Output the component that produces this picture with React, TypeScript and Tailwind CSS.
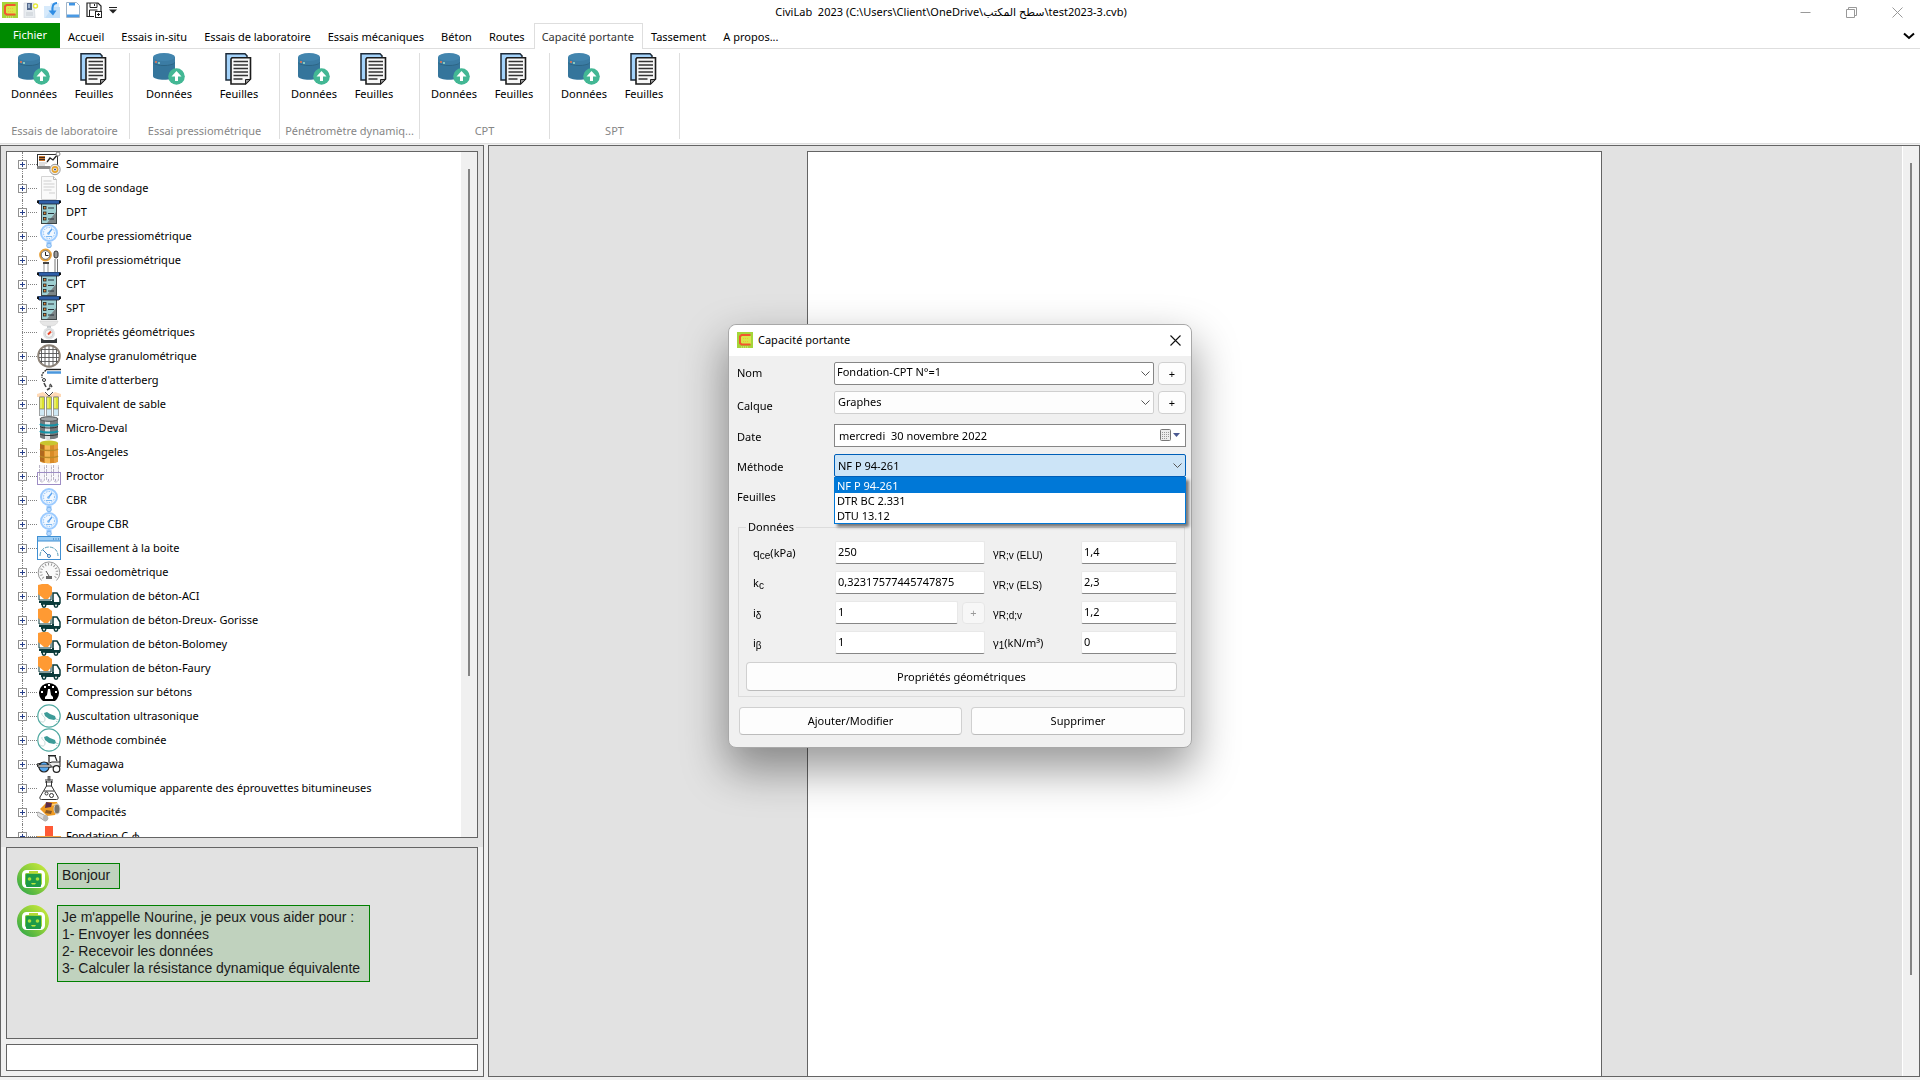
import React, { useState } from 'react';
import { clsx } from 'clsx';

type IconName =
  | 'summary' | 'log' | 'probe' | 'gauge' | 'profile' | 'scale' | 'sieve' | 'atterberg' | 'tubes'
  | 'drum' | 'barrel' | 'proctor' | 'window' | 'dial' | 'truck' | 'press' | 'ultrasound' | 'roller'
  | 'flask' | 'compactor' | 'footing';

interface TreeItem {
  label: string;
  icon: IconName;
  leaf?: boolean;
}

const treeItems: TreeItem[] = [
  { label: 'Sommaire', icon: 'summary' },
  { label: 'Log de sondage', icon: 'log' },
  { label: 'DPT', icon: 'probe' },
  { label: 'Courbe pressiométrique', icon: 'gauge' },
  { label: 'Profil pressiométrique', icon: 'profile' },
  { label: 'CPT', icon: 'probe' },
  { label: 'SPT', icon: 'probe' },
  { label: 'Propriétés géométriques', icon: 'scale', leaf: true },
  { label: 'Analyse granulométrique', icon: 'sieve' },
  { label: "Limite d'atterberg", icon: 'atterberg' },
  { label: 'Equivalent de sable', icon: 'tubes' },
  { label: 'Micro-Deval', icon: 'drum' },
  { label: 'Los-Angeles', icon: 'barrel' },
  { label: 'Proctor', icon: 'proctor' },
  { label: 'CBR', icon: 'gauge' },
  { label: 'Groupe CBR', icon: 'gauge' },
  { label: 'Cisaillement à la boite', icon: 'window' },
  { label: 'Essai oedomètrique', icon: 'dial' },
  { label: 'Formulation de béton-ACI', icon: 'truck' },
  { label: 'Formulation de béton-Dreux- Gorisse', icon: 'truck' },
  { label: 'Formulation de béton-Bolomey', icon: 'truck' },
  { label: 'Formulation de béton-Faury', icon: 'truck' },
  { label: 'Compression sur bétons', icon: 'press' },
  { label: 'Auscultation ultrasonique', icon: 'ultrasound' },
  { label: 'Méthode combinée', icon: 'ultrasound' },
  { label: 'Kumagawa', icon: 'roller' },
  { label: 'Masse volumique apparente des éprouvettes bitumineuses', icon: 'flask' },
  { label: 'Compacités', icon: 'compactor' },
  { label: 'Fondation C-φ', icon: 'footing' },
];

const tabs = [
  'Accueil',
  'Essais in-situ',
  'Essais de laboratoire',
  'Essais mécaniques',
  'Béton',
  'Routes',
  'Capacité portante',
  'Tassement',
  'A propos...',
];

const ribbonGroups = [
  { label: 'Essais de laboratoire', width: 'w-[130px]', button: 'w-[60px]' },
  { label: 'Essai pressiométrique', width: 'w-[150px]', button: 'w-[70px]' },
  { label: 'Pénétromètre dynamiq...', width: 'w-[140px]', button: 'w-[60px]' },
  { label: 'CPT', width: 'w-[130px]', button: 'w-[60px]' },
  { label: 'SPT', width: 'w-[130px]', button: 'w-[60px]' },
];

const methods = ['NF P 94-261', 'DTR BC 2.331', 'DTU 13.12'];

const treeIcons: Record<IconName, React.ReactNode> = {
  summary: (
    <>
      <rect x="0.5" y="2.5" width="20" height="13" fill="#fff" stroke="#333" />
      <rect x="2" y="4" width="6" height="5" fill="#c8742c" />
      <path d="M2 5.5h6M2 7.5h6" stroke="#3b2a20" />
      <path d="M0 14h13v3H0z" fill="#8a8a8a" />
      <path d="M2 11h8M2 13h6" stroke="#bbb" />
      <path d="M10 10l3-4 3 2 5-6" fill="none" stroke="#222" strokeWidth="1.3" />
      <circle cx="21" cy="2" r="2" fill="#fff" stroke="#888" />
      <circle cx="18" cy="17.5" r="5.2" fill="#ededed" stroke="#999" />
      <circle cx="18" cy="17.5" r="2.6" fill="#fff" stroke="#e5a22b" strokeWidth="1.6" />
      <circle cx="18" cy="17.5" r="1" fill="#334a7a" />
    </>
  ),
  log: (
    <>
      <path d="M4.5.5h12l3 3v20h-15z" fill="#fafafa" stroke="#d4d4d4" />
      <path d="M16.5.5v3h3" fill="none" stroke="#bbb" />
      <path d="M6.5 5h8M6.5 8h11M6.5 11h11M6.5 14h8M12 17h6" stroke="#cfcfcf" />
    </>
  ),
  probe: (
    <>
      <rect x="4" y="3" width="16" height="21" fill="#3d4547" />
      <rect x="5" y="4" width="14" height="19" fill="#9fd0d2" />
      <path d="M19 12v11h-9z" fill="#7c8587" />
      <path d="M1 0h22l1 2-2 2H2L0 2z" fill="#2f5fa8" stroke="#1c2533" strokeWidth="0.8" />
      <path d="M0 2h2M22 2h2" stroke="#111" strokeWidth="2" />
      <g fill="#e08a3c" stroke="#222" strokeWidth="0.8">
        <rect x="6.5" y="6.5" width="2.5" height="2.5" />
        <rect x="6.5" y="12" width="2.5" height="2.5" />
        <rect x="6.5" y="17.5" width="2.5" height="2.5" />
      </g>
      <path d="M11 8h6M11 13.5h6M11 19h6" stroke="#26313a" />
    </>
  ),
  gauge: (
    <>
      <circle cx="12" cy="9" r="8" fill="#e6f2ff" stroke="#9ccbff" strokeWidth="2" />
      <circle cx="12" cy="9" r="5.5" fill="#f2f8ff" stroke="#6fb0f5" strokeDasharray="1 1.5" />
      <path d="M11 10l4-5" stroke="#5aa2ee" strokeWidth="1.4" />
      <circle cx="11.5" cy="9.5" r="1.3" fill="#7db8f2" />
      <path d="M9 12.5h6" stroke="#7db8f2" />
      <path d="M9.5 18h5v2h-5z" fill="#9ccbff" />
      <circle cx="12" cy="21.5" r="2.3" fill="#b9dbff" stroke="#7ab4f0" />
    </>
  ),
  profile: (
    <>
      <circle cx="8.5" cy="7" r="5.5" fill="#fff" stroke="#e8a23a" strokeWidth="1.8" />
      <circle cx="8.5" cy="7" r="4.3" fill="none" stroke="#333" strokeWidth="0.7" />
      <path d="M8.5 4v3.5h3" fill="none" stroke="#222" />
      <path d="M6 14h6v2H6z" fill="#444" />
      <path d="M7 16v8M11 16v8" stroke="#999" />
      <rect x="17" y="3" width="4" height="7" rx="2" fill="#999" stroke="#333" />
      <path d="M18 11v13M20.5 11v13" stroke="#777" />
    </>
  ),
  scale: (
    <>
      <path d="M3 1h18c-1 4-4 5-9 5S4 5 3 1z" fill="#e6e6e6" stroke="#d0d0d0" strokeWidth="0.6" />
      <path d="M10 6h4v3h-4z" fill="#c4c8cb" />
      <circle cx="12" cy="13.5" r="6" fill="#e0e3e5" />
      <circle cx="12" cy="13.5" r="4" fill="#f4f4f4" stroke="#cfcfcf" />
      <path d="M11 14.5l3-3" stroke="#e8472b" strokeWidth="2" />
      <path d="M4 18l3 2h10l3-2v5H4z" fill="#34383b" />
    </>
  ),
  sieve: (
    <>
      <circle cx="12" cy="12" r="10.8" fill="#fff" stroke="#8d8378" strokeWidth="2" />
      <path
        d="M4 5.5h16M2 9.5h20M2 13.5h20M3 17.5h18M8 2.5v19M12 2v20M16 2.5v19M4.5 5v14M19.5 5v14"
        stroke="#555"
        strokeWidth="0.9"
      />
    </>
  ),
  atterberg: (
    <>
      <path d="M9 1.5h15" stroke="#222" strokeWidth="1.4" />
      <path d="M10 4.5h14" stroke="#4a97dd" strokeWidth="2.5" />
      <path d="M9 2L5 6v4" fill="none" stroke="#333" strokeDasharray="2 1" strokeWidth="1.4" />
      <circle cx="7" cy="12" r="1.5" fill="none" stroke="#333" />
      <path d="M7 15l2 4M13 16l2 3M10 22l3-2" stroke="#444" strokeWidth="1.6" />
      <circle cx="13" cy="18" r="1.2" fill="#777" />
    </>
  ),
  tubes: (
    <>
      <path d="M0 2l6-2 6 4 6-4 6 2v3H0z" fill="#ffd9b5" />
      <path d="M8 0l4 4 4-4" fill="none" stroke="#444" />
      <g stroke="#8c8c8c" strokeWidth="0.8">
        <path d="M2.5 5h5v19h-5zM9.5 5h5v19h-5zM16.5 5h5v19h-5z" fill="#cfe9f5" />
        <path d="M2.5 5h5v12h-5zM9.5 5h5v12h-5zM16.5 5h5v12h-5z" fill="#dbe22e" />
      </g>
      <path d="M4 6v10M11 6v10M18 6v10" stroke="#f4f7a0" />
    </>
  ),
  drum: (
    <>
      <path d="M3 3v18c0 3 18 3 18 0V3z" fill="#767b7e" />
      <path d="M8 4h5v19H8z" fill="#dde0e2" />
      <ellipse cx="12" cy="3" rx="9" ry="2.3" fill="#9fa4a6" stroke="#4b4f51" />
      <path d="M3 8c2 2 16 2 18 0M3 15c2 2 16 2 18 0" fill="none" stroke="#1391a5" strokeWidth="2.2" />
      <path d="M3 10.5c2 2 16 2 18 0M3 18c2 2 16 2 18 0" fill="none" stroke="#2d3134" />
    </>
  ),
  barrel: (
    <>
      <path d="M3 3v18c0 3 18 3 18 0V3z" fill="#d98b27" />
      <path d="M8 4h5v19H8z" fill="#f6b956" />
      <path d="M17 4h4v18l-4 1z" fill="#e8a040" />
      <path d="M3 4h4v18l-4-1z" fill="#b0691f" />
      <ellipse cx="12" cy="3" rx="9" ry="2.5" fill="#c9c52f" />
      <path d="M3 9c2 2 16 2 18 0M3 16c2 2 16 2 18 0" fill="none" stroke="#b98a28" strokeWidth="1.4" />
    </>
  ),
  proctor: (
    <>
      <g fill="#f7f5fa" stroke="#b9b4c4">
        <path d="M2.5 1v14c0 4 5 4 5 0V1M9.5 1v14c0 4 5 4 5 0V1M16.5 1v14c0 4 5 4 5 0V1" strokeDasharray="3 1" />
      </g>
      <rect x="0.5" y="8.5" width="23" height="12" fill="none" stroke="#9d8cc4" />
      <path d="M4 15v2M11.5 15v2M18.5 15v2" stroke="#b4a8d0" />
    </>
  ),
  window: (
    <>
      <rect x="0.5" y="0.5" width="23" height="23" fill="#fff" stroke="#3f8fd2" />
      <rect x="1" y="1" width="22" height="4" fill="#9bcdf5" />
      <path d="M0 5h24" stroke="#3f8fd2" />
      <path d="M16 3h1M18.5 3h1M21 3h1" stroke="#2b71b0" />
      <path d="M3 20c0-12 18-12 18 0" fill="none" stroke="#5c9fb8" strokeDasharray="4 1" />
      <path d="M6 14l6 6" stroke="#3679b5" />
      <circle cx="12" cy="20" r="1.5" fill="#fff" stroke="#3679b5" />
    </>
  ),
  dial: (
    <>
      <path d="M4.5 20.5a10.8 10.8 0 1 1 15 0" fill="#fafafa" stroke="#999" />
      <path d="M6.5 18a8 8 0 1 1 11 0" fill="none" stroke="#999" strokeWidth="2.5" strokeDasharray="1 2" />
      <path d="M9 11l3 5" stroke="#555" />
      <path d="M9 16h6v3H9z" fill="#666" />
    </>
  ),
  truck: (
    <>
      <path d="M2 9v7h12V9" fill="#fff" stroke="#0a3a3a" />
      <path d="M1 1l4-1h6l4 3v7l-4 5H7l-6-5z" fill="#ff9a33" />
      <path d="M16 9h4l3 5v5h-7z" fill="#fff" stroke="#0a3a3a" strokeWidth="1.5" />
      <path d="M2 17h13v-1h2v2h6v3H4v-2H2z" fill="#0a3a3a" />
      <circle cx="7" cy="21.5" r="1.7" fill="#fff" stroke="#0a3a3a" strokeWidth="1.5" />
      <circle cx="19" cy="21.5" r="1.7" fill="#fff" stroke="#0a3a3a" strokeWidth="1.5" />
    </>
  ),
  press: (
    <>
      <path d="M6 21h12l2-2a10 10 0 1 0-16 0z" fill="#000" />
      <path d="M11 9h2l1 6 2 2v2H8v-2l2-2z" fill="#fff" />
      <g fill="#fff">
        <rect x="4" y="11" width="2" height="2" />
        <rect x="18" y="11" width="2" height="2" />
        <rect x="7" y="6" width="2" height="2" />
        <rect x="15" y="6" width="2" height="2" />
        <rect x="11" y="4" width="2" height="2" />
      </g>
    </>
  ),
  ultrasound: (
    <>
      <circle cx="12" cy="12" r="11.2" fill="#fff" stroke="#4fa9a1" strokeWidth="1.2" />
      <path d="M3 17c3 2 5 1 5-2s-4-3-3-6" fill="none" stroke="#c7dcda" />
      <path d="M7 9l3-1 3 2 5 2 1 3-2 1-5-1-4-3z" fill="#3d9b98" />
      <path d="M19 15l3 1M19 17l2 2" stroke="#b5cfcd" />
    </>
  ),
  roller: (
    <>
      <path d="M12 10V4h6l2 5" fill="#fff" stroke="#222" strokeWidth="1.2" />
      <path d="M11 3.500h8M23 4v6" stroke="#222" strokeWidth="1.2" />
      <path d="M0 12l5-1h7l3-1h8v5H1z" fill="#eee" stroke="#222" />
      <circle cx="7" cy="15" r="5" fill="#57a8ee" stroke="#222" strokeWidth="1.2" />
      <path d="M1 13h13v2H1z" fill="#fff" stroke="#222" strokeWidth="0.8" />
      <circle cx="19.5" cy="17" r="3.3" fill="#fff" stroke="#222" strokeWidth="1.2" />
    </>
  ),
  flask: (
    <>
      <path d="M9.5 5v5L3 21c-.5 1.500 0 2.500 1.500 2.500h15c1.500 0 2-1 1.500-2.500L14.500 10V5" fill="#fff" stroke="#333" />
      <path d="M8 4h8M8 6h8M9 10h6M7 15h10" stroke="#333" />
      <path d="M11 0h2v4h-2z" fill="#999" stroke="#333" strokeWidth="0.7" />
      <circle cx="9.5" cy="17.5" r="1.5" fill="none" stroke="#333" />
      <circle cx="14.5" cy="19.5" r="2" fill="none" stroke="#333" />
    </>
  ),
  compactor: (
    <>
      <path d="M3 9l7-7 10 0 2 6-4 7-8 1z" fill="#ee9a22" />
      <path d="M9 2l6 1-1 4-6 1z" fill="#5b2b4b" />
      <path d="M9 10l6 1-1 3-6-1z" fill="#8a5a28" />
      <path d="M15 5l5-1" stroke="#ffd27a" strokeWidth="1.5" />
      <ellipse cx="20" cy="9" rx="3" ry="5" fill="#77736c" stroke="#ccc" />
      <path d="M1 12l8 4c3 1 2 5-1 5L2 17c-2-1-3-4-1-5z" fill="#e3e3e3" stroke="#888" strokeWidth="0.8" />
      <ellipse cx="8.5" cy="18" rx="2.5" ry="3" fill="#b5b5b5" />
    </>
  ),
  footing: (
    <>
      <rect x="8" y="2" width="8" height="12" fill="#ff5a36" />
      <path d="M0 12h24v3H0z" fill="#f2a341" />
    </>
  ),
};

const TreeIcon: React.FC<{ name: IconName }> = ({ name }) => (
  <svg className="size-6 shrink-0" viewBox="0 0 24 24" aria-hidden="true">
    {treeIcons[name]}
  </svg>
);

const Logo: React.FC = () => (
  <svg className="size-4 shrink-0" viewBox="0 0 16 16" aria-hidden="true">
    <rect width="16" height="16" fill="#a5d63a" />
    <rect x="4" y="4" width="10" height="8" fill="#d8e84a" />
    <path d="M13.5 3h-9L3 4.500v6.500l1.500 1.500h9" fill="none" stroke="#f2562f" strokeWidth="2" />
    <path d="M6 6.5h6M6 9.5h6" stroke="#eebf3c" strokeDasharray="1 1" />
    <path d="M4 15h8" stroke="#dff08a" strokeDasharray="1 1" />
  </svg>
);

const DatabaseIcon: React.FC = () => (
  <svg className="size-8" viewBox="0 0 32 32" aria-hidden="true">
    <path d="M0 4v19c0 5 22 5 22 0V4z" fill="#35759b" />
    <path d="M0 4v6c0 4 22 4 22 0V4z" fill="#3b7ca4" />
    <ellipse cx="11" cy="4" rx="11" ry="4" fill="#4285ae" />
    <path d="M0 9.5c2 4 20 4 22 0" fill="none" stroke="#2b6484" />
    <path d="M2 9h2" stroke="#f0764f" strokeWidth="1.5" />
    <path d="M5 10h2" stroke="#9fe0c8" strokeWidth="1.5" />
    <circle cx="23.5" cy="23.5" r="8.3" fill="#43b794" />
    <path d="M23.5 18l5 5.500h-3.500V28h-3v-4.500h-3.500z" fill="#fff" />
  </svg>
);

const SheetsIcon: React.FC = () => (
  <svg className="size-8" viewBox="0 0 32 32" aria-hidden="true">
    <path d="M3 .8h19l2 2V27H3z" fill="#a4d3fb" stroke="#1d2b3a" strokeWidth="1.5" />
    <path d="M9 4.800h18.500V26l-5 5H8V6z" fill="#f7f7f7" stroke="#1c1c1c" strokeWidth="1.6" />
    <path
      d="M10.5 8.5h14.500M10.5 12h14.500M10.5 15.5h14.500M10.5 19h14.500M10.5 22.5h14.500M10.5 26h9"
      stroke="#333"
      strokeWidth="1.5"
    />
    <path d="M22.5 31v-4.500h5z" fill="#999" stroke="#1c1c1c" />
  </svg>
);

const Chevron: React.FC<{ className?: string }> = ({ className }) => (
  <svg className={clsx('pointer-events-none h-[5px] w-[9px]', className)} viewBox="0 0 9 5" aria-hidden="true">
    <path d="M.5.5l4 4 4-4" fill="none" stroke="#555" />
  </svg>
);

const RobotAvatar: React.FC = () => (
  <svg className="size-8 shrink-0" viewBox="0 0 32 32" aria-hidden="true">
    <defs>
      <linearGradient id="robot-bg" x1="1" y1="0" x2="0" y2="1">
        <stop offset="0" stopColor="#d4ee3a" />
        <stop offset="0.5" stopColor="#86cc3c" />
        <stop offset="1" stopColor="#1fa04a" />
      </linearGradient>
    </defs>
    <circle cx="16" cy="16" r="16" fill="url(#robot-bg)" />
    <rect x="6.5" y="8.5" width="20" height="15" rx="3" fill="none" stroke="#fff" strokeWidth="3" />
    <path d="M12 8h9v2h-9z" fill="#b5d936" />
    <rect x="9" y="11" width="15" height="13" rx="1" fill="#1d9a48" />
    <circle cx="12.5" cy="16" r="1.8" fill="#a7e03c" />
    <circle cx="20.5" cy="16" r="1.8" fill="#a7e03c" />
    <path d="M14 20h5l-1 1.500h-3z" fill="#b9e63e" />
  </svg>
);

const TitleBar: React.FC = () => (
  <div className="flex h-[23px] items-start">
    <div className="flex w-[120px] items-center gap-[5px] pl-0.5 pt-0.5">
      <Logo />
      <button type="button" aria-label="Nouveau">
        <svg className="size-4" viewBox="0 0 16 16">
          <path d="M1 1h10l1 15H1z" fill="#e8ecf0" stroke="#ccd2d8" strokeWidth="0.6" />
          <path d="M4 1h5v7H4z" fill="#53688c" />
          <path d="M5 2h2v4H5z" fill="#9db2cc" />
          <path d="M3 11h7M3 13h7" stroke="#c6ccd2" />
          <circle cx="12.5" cy="4" r="2" fill="#fff" stroke="#e8ea3c" strokeWidth="1.4" />
        </svg>
      </button>
      <button type="button" aria-label="Ouvrir">
        <svg className="size-4" viewBox="0 0 16 16">
          <path d="M0 4h6l1-3h8v15H0z" fill="#d7eafb" />
          <path d="M9 5h7v11H1z" fill="#c2dff8" />
          <path d="M13 1c-4 0-5 3-4.500 9" fill="none" stroke="#2f8de4" strokeWidth="2" />
          <path d="M4.5 8.5h8l-3.500 5z" fill="#2f8de4" />
        </svg>
      </button>
      <button type="button" aria-label="Page">
        <svg className="size-4" viewBox="0 0 16 16">
          <path d="M1.5.5h10l3 3v12h-13z" fill="#fff" stroke="#9fb4c8" />
          <path d="M4 1h6v2.500H4z" fill="#3f94e3" />
          <path d="M2 12.5h12V15H2z" fill="#4a9ae4" />
        </svg>
      </button>
      <button type="button" aria-label="Enregistrer">
        <svg className="size-4" viewBox="0 0 16 16">
          <path d="M8 14.5H1V1h11l3 3v5" fill="none" stroke="#222" strokeWidth="1.2" />
          <path d="M4 1v4.500h7V1M8.5 2v2M3.5 14V8h8" fill="none" stroke="#222" />
          <rect x="9.5" y="9.5" width="6" height="6" fill="#fff" stroke="#222" />
          <path d="M12.5 11v3M11 12.5h3" stroke="#222" />
        </svg>
      </button>
      <button type="button" aria-label="Personnaliser" className="pl-0.5">
        <svg className="h-4 w-2" viewBox="0 0 8 16">
          <path d="M0 5.5h8" stroke="#222" />
          <path d="M0 7.5h8l-4 4z" fill="#222" />
        </svg>
      </button>
    </div>
    <h1 className="flex-1 whitespace-pre text-center leading-6">
      {'CiviLab  2023 (C:\\Users\\Client\\OneDrive\\سطح المكتب\\test2023-3.cvb)'}
    </h1>
    <div className="flex text-[#999]">
      <button type="button" aria-label="Réduire" className="flex h-6 w-[46px] items-center justify-center">
        <svg className="size-[11px]" viewBox="0 0 11 11">
          <path d="M.5 5.5h10" stroke="currentColor" />
        </svg>
      </button>
      <button type="button" aria-label="Restaurer" className="flex h-6 w-[46px] items-center justify-center">
        <svg className="size-[11px]" viewBox="0 0 11 11" fill="none" stroke="currentColor">
          <path d="M.5 2.5h8v8h-8zM2.5 2.5v-2h8v8h-2" />
        </svg>
      </button>
      <button type="button" aria-label="Quitter" className="flex h-6 w-[46px] items-center justify-center">
        <svg className="size-[11px]" viewBox="0 0 11 11">
          <path d="M.5.5l10 10M10.5.5l-10 10" stroke="currentColor" />
        </svg>
      </button>
    </div>
  </div>
);

const Ribbon: React.FC = () => {
  const [active, setActive] = useState('Capacité portante');

  return (
    <header className="bg-white">
      <TitleBar />
      <nav className="flex h-[26px] border-b border-[#dedede]">
        <button type="button" className="h-[25px] w-[60px] bg-[#008b00] text-white">Fichier</button>
        {tabs.map((tab) => (
          <button
            key={tab}
            type="button"
            onClick={() => setActive(tab)}
            className={clsx(
              'h-[26px] border border-b-0 pl-[7px] pr-2 pt-0.5',
              tab === active ? 'border-[#dedede] bg-white text-[#333]' : 'border-transparent'
            )}
          >
            {tab}
          </button>
        ))}
        <button type="button" aria-label="Réduire le ruban" className="ml-auto mr-[5px]">
          <svg className="h-2 w-3" viewBox="0 0 12 8">
            <path d="M1 1.5l5 4.500 5-4.500" fill="none" stroke="#000" strokeWidth="2" />
          </svg>
        </button>
      </nav>
      <div className="flex h-[95px] border-b border-[#dedede] pb-1 pt-1">
        {ribbonGroups.map((group) => (
          <section
            key={group.label}
            className={clsx('flex flex-col justify-between border-r border-[#dedede]', group.width)}
          >
            <div className="flex pl-1">
              <button type="button" className={clsx('flex flex-col items-center', group.button)}>
                <DatabaseIcon />
                <span className="leading-[18px]">Données</span>
              </button>
              <button type="button" className={clsx('flex flex-col items-center', group.button)}>
                <SheetsIcon />
                <span className="leading-[18px]">Feuilles</span>
              </button>
            </div>
            <h2 className="whitespace-nowrap text-center leading-4 text-[#868686]">{group.label}</h2>
          </section>
        ))}
      </div>
    </header>
  );
};

const Tree: React.FC = () => (
  <div className="flex min-h-0 flex-1 border border-[#646464] bg-white">
    <ul className="flex-1 overflow-hidden">
      {treeItems.map((item) => (
        <li key={item.label} className="flex h-6 items-center pl-[11px]">
          <span className="relative flex h-6 w-[19px] items-center">
            <span className="absolute inset-y-0 left-1 border-l border-dotted border-[#808080]" />
            <span className="absolute left-1 right-0 border-t border-dotted border-[#808080]" />
            {!item.leaf && (
              <button
                type="button"
                aria-label={`Développer ${item.label}`}
                className="relative size-[9px] border border-[#919191] bg-white"
              >
                <svg className="size-[7px]" viewBox="0 0 7 7">
                  <path d="M1 3.5h5M3.5 1v5" stroke="#27408b" />
                </svg>
              </button>
            )}
          </span>
          <TreeIcon name={item.icon} />
          <span className="whitespace-nowrap pl-[5px]">{item.label}</span>
        </li>
      ))}
    </ul>
    <div className="flex w-4 justify-center bg-[#f0f0f0] pb-[161px] pt-[17px]">
      <div className="w-0.5 bg-[#858585]" />
    </div>
  </div>
);

const messages = [
  'Bonjour',
  "Je m'appelle Nourine, je peux vous aider pour :\n1- Envoyer les données\n2- Recevoir les données\n3- Calculer la résistance dynamique équivalente",
];

const Sidebar: React.FC = () => (
  <aside className="flex w-[484px] shrink-0 flex-col border border-[#646464] bg-[#f0f0f0]">
    <div className="flex min-h-0 flex-1 flex-col bg-[#e2e2e2] px-[5px] pb-[9px] pt-[5px]">
      <Tree />
    </div>
    <div className="flex flex-col gap-[5px] px-[5px] pb-[5px]">
      <div className="flex h-48 flex-col gap-2.5 border border-[#646464] bg-[#e2e2e2] pl-2.5 pt-[15px]">
        {messages.map((message) => (
          <div key={message} className="flex items-start gap-2">
            <RobotAvatar />
            <p className="whitespace-pre-line border border-[#008000] bg-[#c0d2be] pb-1 pl-1 pr-[9px] pt-[3px] font-['Liberation_Sans',Arial,sans-serif] text-[14px] leading-[17px] text-[#1a1a1a]">
              {message}
            </p>
          </div>
        ))}
      </div>
      <input aria-label="Message" className="h-[27px] border border-[#646464] bg-white px-1 outline-none" />
    </div>
  </aside>
);

const Workspace: React.FC = () => (
  <main className="flex flex-1 border border-[#646464] bg-[#e2e2e2]">
    <div className="flex flex-1 justify-center pl-[17px] pt-[5px]">
      <div className="w-[795px] border border-b-0 border-[#646464] bg-white" />
    </div>
    <div className="flex w-[17px] justify-center border-l border-white bg-[#f0f0f0] pb-[101px] pt-[17px]">
      <div className="w-0.5 bg-[#858585]" />
    </div>
  </main>
);

const smallButton =
  'h-[23px] w-7 rounded-[4px] border border-[#d0d0d0] bg-[#fdfdfd] leading-none';
const wideButton = 'rounded-[4px] border border-[#d0d0d0] border-b-[#bcbcbc] bg-[#fdfdfd]';
const fieldInput =
  'h-[23px] w-full min-w-0 rounded-[2px] border border-[#e8e8e8] border-b-[#868686] bg-white px-[2px] pb-0.5 outline-none';

const Field: React.FC<{ id: string; value: string; label: React.ReactNode; children?: React.ReactNode }> = ({
  id,
  value,
  label,
  children,
}) => (
  <>
    <label htmlFor={id} className="whitespace-nowrap">{label}</label>
    <div className="flex items-center gap-1">
      <input id={id} defaultValue={value} className={fieldInput} />
      {children}
    </div>
  </>
);

const Sub: React.FC<{ children: React.ReactNode }> = ({ children }) => (
  <sub className="font-['Liberation_Sans',Arial,sans-serif] text-[10px]">{children}</sub>
);

const BearingDialog: React.FC = () => {
  const [method, setMethod] = useState(methods[0]);

  return (
    <div className="fixed inset-0 flex items-center justify-center pb-2">
      <div
        role="dialog"
        aria-labelledby="dialog-title"
        className="w-[464px] rounded-lg border border-[#a8a8a8] bg-[#f0f0f0] shadow-[0_20px_44px_2px_rgba(0,0,0,0.4)]"
      >
        <div className="flex h-[31px] items-center rounded-t-lg bg-white pl-2 pr-2.5">
          <Logo />
          <h2 id="dialog-title" className="pl-[5px]">Capacité portante</h2>
          <button type="button" aria-label="Fermer" className="ml-auto">
            <svg className="size-[11px]" viewBox="0 0 11 11">
              <path d="M.5.5l10 10M10.5.5l-10 10" stroke="#111" strokeWidth="1.1" />
            </svg>
          </button>
        </div>

        <div className="pb-3 pl-2 pr-[5px] pt-1.5">
          <div className="grid grid-cols-[97px_1fr] items-center">
            <label htmlFor="nom">Nom</label>
            <div className="flex gap-1">
              <div className="relative flex-1">
                <select
                  id="nom"
                  className="h-[23px] w-full appearance-none rounded-[2px] border border-[#868686] bg-white px-[2px] pb-0.5"
                >
                  <option>Fondation-CPT N°=1</option>
                </select>
                <Chevron className="absolute right-1 top-[9px]" />
              </div>
              <button type="button" aria-label="Ajouter un nom" className={smallButton}>+</button>
            </div>

            <label htmlFor="calque" className="pt-[13px]">Calque</label>
            <div className="flex gap-1 pt-1.5">
              <div className="relative flex-1">
                <select
                  id="calque"
                  className="h-[23px] w-full appearance-none rounded-[2px] border border-[#cfcfcf] bg-[#fdfdfd] px-[3px]"
                >
                  <option>Graphes</option>
                </select>
                <Chevron className="absolute right-1 top-[9px]" />
              </div>
              <button type="button" aria-label="Ajouter un calque" className={smallButton}>+</button>
            </div>

            <label htmlFor="date" className="pt-[13px]">Date</label>
            <div className="relative pt-[10px]">
              <input
                id="date"
                defaultValue="mercredi  30 novembre 2022"
                className="h-[23px] w-full border border-[#868686] bg-white px-1 outline-none"
              />
              <svg className="absolute right-1.5 top-[15px] h-3 w-5" viewBox="0 0 20 12" aria-hidden="true">
                <rect x="0.5" y="0.5" width="10" height="11" rx="1" fill="#ececec" stroke="#777" />
                <path d="M2 3.5h7M2 5.5h7M2 7.5h7M2 9.5h5" stroke="#999" strokeDasharray="1 1" />
                <path d="M13 4h7l-3.500 4z" fill="#4b5a92" />
              </svg>
            </div>

            <label htmlFor="methode" className="pt-[9px]">Méthode</label>
            <div className="relative z-10 pt-[7px]">
              <select
                id="methode"
                value={method}
                onChange={(e) => setMethod(e.target.value)}
                className="h-[23px] w-full appearance-none rounded-[2px] border border-[#005fb8] bg-[#cce4f7] px-[3px]"
              >
                {methods.map((m) => (
                  <option key={m}>{m}</option>
                ))}
              </select>
              <Chevron className="absolute right-1 top-4" />
              <ul
                role="listbox"
                aria-label="Méthode"
                className="absolute inset-x-0 top-full border border-[#0078d7] bg-white shadow-[3px_3px_3px_rgba(0,0,0,0.5)]"
              >
                {methods.map((m) => (
                  <li
                    key={m}
                    role="option"
                    aria-selected={m === method}
                    onClick={() => setMethod(m)}
                    className={clsx('h-[15px] px-[2px] leading-[15px]', m === method && 'bg-[#0078d7] text-white')}
                  >
                    {m}
                  </li>
                ))}
              </ul>
            </div>

            <span className="pt-3 leading-4">Feuilles</span>
          </div>

          <fieldset className="mx-px mt-[14px] border border-[#dcdcdc] px-[7px] pb-[5px]">
            <legend className="px-0.5 leading-4">Données</legend>
            <div className="grid grid-cols-[82px_150px_80px_96px] items-center gap-y-[7px] pl-[7px] pt-1.5">
              <Field id="qce" value="250" label={<>q<Sub>ce</Sub>(kPa)</>} />
              <div className="col-span-2 col-start-3 grid grid-cols-[88px_96px] items-center pl-2">
                <Field id="elu" value="1,4" label={<>γ<Sub>R;v (ELU)</Sub></>} />
              </div>
              <Field id="kc" value="0,32317577445747875" label={<>k<Sub>c</Sub></>} />
              <div className="col-span-2 col-start-3 grid grid-cols-[88px_96px] items-center pl-2">
                <Field id="els" value="2,3" label={<>γ<Sub>R;v (ELS)</Sub></>} />
              </div>
              <Field id="idelta" value="1" label={<>i<Sub>δ</Sub></>}>
                <button
                  type="button"
                  disabled
                  aria-label="Calculer iδ"
                  className="h-[22px] w-[23px] shrink-0 rounded-[4px] border border-[#e6e6e6] bg-[#f7f7f7] leading-none text-[#999]"
                >
                  +
                </button>
              </Field>
              <div className="col-span-2 col-start-3 grid grid-cols-[88px_96px] items-center pl-2">
                <Field id="rdv" value="1,2" label={<>γ<Sub>R;d;v</Sub></>} />
              </div>
              <Field id="ibeta" value="1" label={<>i<Sub>β</Sub></>} />
              <div className="col-span-2 col-start-3 grid grid-cols-[88px_96px] items-center pl-2">
                <Field id="gamma" value="0" label={<>γ<Sub>1</Sub>(kN/m³)</>} />
              </div>
            </div>
            <button type="button" className={clsx('mt-2 h-[29px] w-full', wideButton)}>
              Propriétés géométriques
            </button>
          </fieldset>

          <div className="grid grid-cols-[223px_1fr] gap-[9px] pl-0.5 pr-px pt-[10px]">
            <button type="button" className={clsx('h-7', wideButton)}>Ajouter/Modifier</button>
            <button type="button" className={clsx('h-7', wideButton)}>Supprimer</button>
          </div>
        </div>
      </div>
    </div>
  );
};

const App: React.FC = () => {
  return (
    <div className="flex h-screen flex-col overflow-hidden bg-[#f0f0f0] font-['Noto_Sans','Open_Sans','DejaVu_Sans',sans-serif] text-[11px] text-black">
      <Ribbon />
      <div className="flex min-h-0 flex-1 gap-1 pb-[3px] pt-px">
        <Sidebar />
        <Workspace />
      </div>
      <BearingDialog />
    </div>
  );
};

export default App;
